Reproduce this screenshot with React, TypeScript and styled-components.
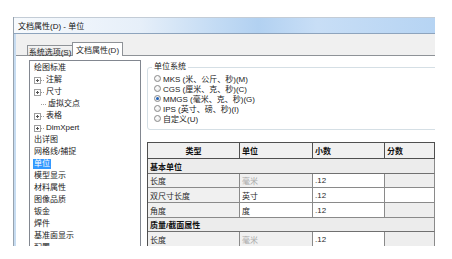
import React from "react";
import styled, { createGlobalStyle } from "styled-components";

const Global = createGlobalStyle`
  * { box-sizing: border-box; }
  html, body { margin: 0; padding: 0; background: #ffffff; }
  body {
    font-family: "Liberation Sans", "Noto Sans CJK SC", sans-serif;
    font-size: 8px;
    color: #1e1e1e;
  }
`;

const Page = styled.div`
  width: 452px;
  height: 259px;
  padding: 17px 0 0 13px;
  overflow: hidden;
  background: #ffffff;
`;

const Window = styled.div`
  width: 422px;
  height: 229px;
  overflow: hidden;
  display: flex;
  flex-direction: column;
  border-left: 1px solid #97a3af;
`;

const TitleBar = styled.div`
  height: 17px;
  flex: none;
  display: flex;
  align-items: center;
  padding-left: 4px;
  border-top: 1px solid #c3ccd6;
  border-bottom: 1px solid #8ea4bd;
  background: linear-gradient(
    to right,
    #f7fafd 0%,
    #e6eff9 30%,
    #c3dbf4 48%,
    #b2d1f1 58%,
    #c8def6 72%,
    #b6d4f3 100%
  );
  color: #111;
  white-space: nowrap;
`;

const Client = styled.div`
  flex: 1;
  display: flex;
  flex-direction: column;
  border-left: 2px solid #c7dcf1;
  background: #f0f0f0;
  min-height: 0;
`;

const TabStrip = styled.div`
  height: 21px;
  flex: none;
  display: flex;
  align-items: flex-end;
  padding-left: 11px;
`;

const Tab = styled.div<{ $active?: boolean }>`
  position: relative;
  z-index: 1;
  display: flex;
  align-items: center;
  justify-content: center;
  white-space: nowrap;
  border: 1px solid #8e9297;
  border-bottom: none;
  height: ${(p) => (p.$active ? "14px" : "10px")};
  width: ${(p) => (p.$active ? "51px" : "46px")};
  margin-bottom: ${(p) => (p.$active ? "-1px" : "0")};
  margin-right: ${(p) => (p.$active ? "0" : "-1px")};
  background: ${(p) =>
    p.$active ? "#ffffff" : "linear-gradient(#f4f4f4, #e3e3e3)"};
  padding-top: ${(p) => (p.$active ? "0" : "1px")};
`;

const TabPanel = styled.div`
  flex: 1;
  display: flex;
  align-items: flex-start;
  background: #ffffff;
  border-top: 1px solid #8e9297;
  padding: 4px 0 0 13px;
  min-height: 0;
`;

const Tree = styled.div`
  width: 112px;
  height: 200px;
  flex: none;
  border: 1px solid #828790;
  background: #ffffff;
  padding-top: 1px;
`;

const TreeRow = styled.div<{ $indent: number }>`
  height: 12px;
  display: flex;
  align-items: center;
  padding-left: ${(p) => p.$indent}px;
  white-space: nowrap;
  color: #1a1a1a;
`;

const TreeLabel = styled.span<{ $selected?: boolean }>`
  line-height: 10px;
  padding: 0 1px;
  margin-left: -1px;
  background: ${(p) => (p.$selected ? "#3399ff" : "transparent")};
  color: ${(p) => (p.$selected ? "#ffffff" : "inherit")};
`;

const RightPane = styled.div`
  flex: 1;
  margin-left: 6px;
  padding-top: 7px;
  display: flex;
  flex-direction: column;
`;

const GroupBox = styled.div`
  position: relative;
  width: 300px;
  height: 63px;
  border: 1px solid #d5dfe5;
  border-radius: 3px;
  padding: 5px 0 0 6px;
`;

const GroupTitle = styled.span`
  position: absolute;
  top: -7px;
  left: 4px;
  padding: 0 2px;
  background: #ffffff;
  line-height: 11px;
  color: #1a1a1a;
`;

const RadioRow = styled.div`
  height: 10px;
  display: flex;
  align-items: center;
  gap: 2px;
  white-space: nowrap;
  color: #1a1a1a;
`;

const RadioDot = styled.span<{ $checked?: boolean }>`
  position: relative;
  width: 7px;
  height: 7px;
  flex: none;
  border-radius: 50%;
  border: 1px solid #8a8a8a;
  background: radial-gradient(circle at 40% 35%, #ffffff 0%, #e6e6e6 80%);
  &::after {
    content: "";
    display: ${(p) => (p.$checked ? "block" : "none")};
    position: absolute;
    left: 1px;
    top: 1px;
    width: 3px;
    height: 3px;
    border-radius: 50%;
    background: #1d5fb8;
  }
`;

const Table = styled.table`
  margin-top: 12px;
  width: 288px;
  table-layout: fixed;
  border-collapse: separate;
  border-spacing: 0;
  border-left: 1px solid #4f4f4f;
  border-top: 1px solid #4f4f4f;
  font-size: 8px;
`;

const Tr = styled.tr<{ $h: number }>`
  height: ${(p) => p.$h}px;
`;

const Th = styled.th<{ $w: number; $center?: boolean }>`
  width: ${(p) => p.$w}px;
  height: 16px;
  padding: 0 2px;
  background: #f0f0f0;
  border-right: 1px solid #4f4f4f;
  border-bottom: 1px solid #4f4f4f;
  text-align: ${(p) => (p.$center ? "center" : "left")};
  font-weight: bold;
  color: #111;
  white-space: nowrap;
`;

const SectionCell = styled.td`
  padding: 0 2px;
  background: #ececec;
  border-right: 1px solid #8a8a8a;
  border-bottom: 1px solid #707070;
  font-weight: bold;
  color: #111;
  white-space: nowrap;
`;

const Td = styled.td<{ $bg: string; $muted?: boolean }>`
  padding: 0 2px;
  background: ${(p) => p.$bg};
  color: ${(p) => (p.$muted ? "#a8a8a8" : "#2a2a2a")};
  border-right: 1px solid #8a8a8a;
  border-bottom: 1px solid #8a8a8a;
  white-space: nowrap;
  overflow: hidden;
`;

const Expander = () => (
  <svg width="12" height="9" viewBox="0 0 12 9">
    <rect x="0.5" y="1.5" width="6" height="6" fill="#fff" stroke="#a0a0a0" />
    <path d="M2 4.5h3M3.5 3v3" stroke="#555" strokeWidth="1" />
    <path d="M7 4.5h4" stroke="#a0a0a0" strokeDasharray="1 1" />
  </svg>
);

const Connector = () => (
  <svg width="14" height="9" viewBox="0 0 14 9">
    <path d="M7 4.5h6" stroke="#a0a0a0" strokeDasharray="1 1" />
  </svg>
);

type TreeItem = { label: string; kind: "root" | "expand" | "leaf"; selected?: boolean };

const treeItems: TreeItem[] = [
  { label: "绘图标准", kind: "root" },
  { label: "注解", kind: "expand" },
  { label: "尺寸", kind: "expand" },
  { label: "虚拟交点", kind: "leaf" },
  { label: "表格", kind: "expand" },
  { label: "DimXpert", kind: "expand" },
  { label: "出详图", kind: "root" },
  { label: "网格线/捕捉", kind: "root" },
  { label: "单位", kind: "root", selected: true },
  { label: "模型显示", kind: "root" },
  { label: "材料属性", kind: "root" },
  { label: "图像品质", kind: "root" },
  { label: "钣金", kind: "root" },
  { label: "焊件", kind: "root" },
  { label: "基准面显示", kind: "root" },
  { label: "配置", kind: "root" },
];

const radios = [
  { label: "MKS (米、公斤、秒)(M)", checked: false },
  { label: "CGS (厘米、克、秒)(C)", checked: false },
  { label: "MMGS (毫米、克、秒)(G)", checked: true },
  { label: "IPS (英寸、磅、秒)(I)", checked: false },
  { label: "自定义(U)", checked: false },
];

type Row =
  | { section: string; h: number }
  | {
      type: string;
      unit: string;
      unitMuted: boolean;
      decimal: string;
      fractionWhite: boolean;
      h: number;
    };

const rows: Row[] = [
  { section: "基本单位", h: 15 },
  { type: "长度", unit: "毫米", unitMuted: true, decimal: ".12", fractionWhite: false, h: 14 },
  { type: "双尺寸长度", unit: "英寸", unitMuted: false, decimal: ".12", fractionWhite: true, h: 15 },
  { type: "角度", unit: "度", unitMuted: false, decimal: ".12", fractionWhite: false, h: 15 },
  { section: "质量/截面属性", h: 14 },
  { type: "长度", unit: "毫米", unitMuted: true, decimal: ".12", fractionWhite: false, h: 15 },
];

export default function App() {
  return (
    <Page>
      <Global />
      <Window>
        <TitleBar>文档属性(D) - 单位</TitleBar>
        <Client>
          <TabStrip>
            <Tab>系统选项(S)</Tab>
            <Tab $active>文档属性(D)</Tab>
          </TabStrip>
          <TabPanel>
            <Tree>
              {treeItems.map((item, i) => (
                <TreeRow key={i} $indent={item.kind === "root" ? 4 : 4}>
                  {item.kind === "expand" && <Expander />}
                  {item.kind === "leaf" && <Connector />}
                  <TreeLabel $selected={item.selected}>{item.label}</TreeLabel>
                </TreeRow>
              ))}
            </Tree>
            <RightPane>
              <GroupBox>
                <GroupTitle>单位系统</GroupTitle>
                {radios.map((r) => (
                  <RadioRow key={r.label}>
                    <RadioDot $checked={r.checked} />
                    <span>{r.label}</span>
                  </RadioRow>
                ))}
              </GroupBox>
              <Table>
                <thead>
                  <tr>
                    <Th $w={92} $center>类型</Th>
                    <Th $w={73}>单位</Th>
                    <Th $w={72}>小数</Th>
                    <Th $w={50}>分数</Th>
                  </tr>
                </thead>
                <tbody>
                  {rows.map((r, i) =>
                    "section" in r ? (
                      <Tr key={i} $h={r.h}>
                        <SectionCell colSpan={4}>{r.section}</SectionCell>
                      </Tr>
                    ) : (
                      <Tr key={i} $h={r.h}>
                        <Td $bg="#f0f0f0">{r.type}</Td>
                        <Td $bg={r.unitMuted ? "#f0f0f0" : "#ffffff"} $muted={r.unitMuted}>
                          {r.unit}
                        </Td>
                        <Td $bg="#ffffff">{r.decimal}</Td>
                        <Td $bg={r.fractionWhite ? "#ffffff" : "#eeeeee"} />
                      </Tr>
                    )
                  )}
                </tbody>
              </Table>
            </RightPane>
          </TabPanel>
        </Client>
      </Window>
    </Page>
  );
}
